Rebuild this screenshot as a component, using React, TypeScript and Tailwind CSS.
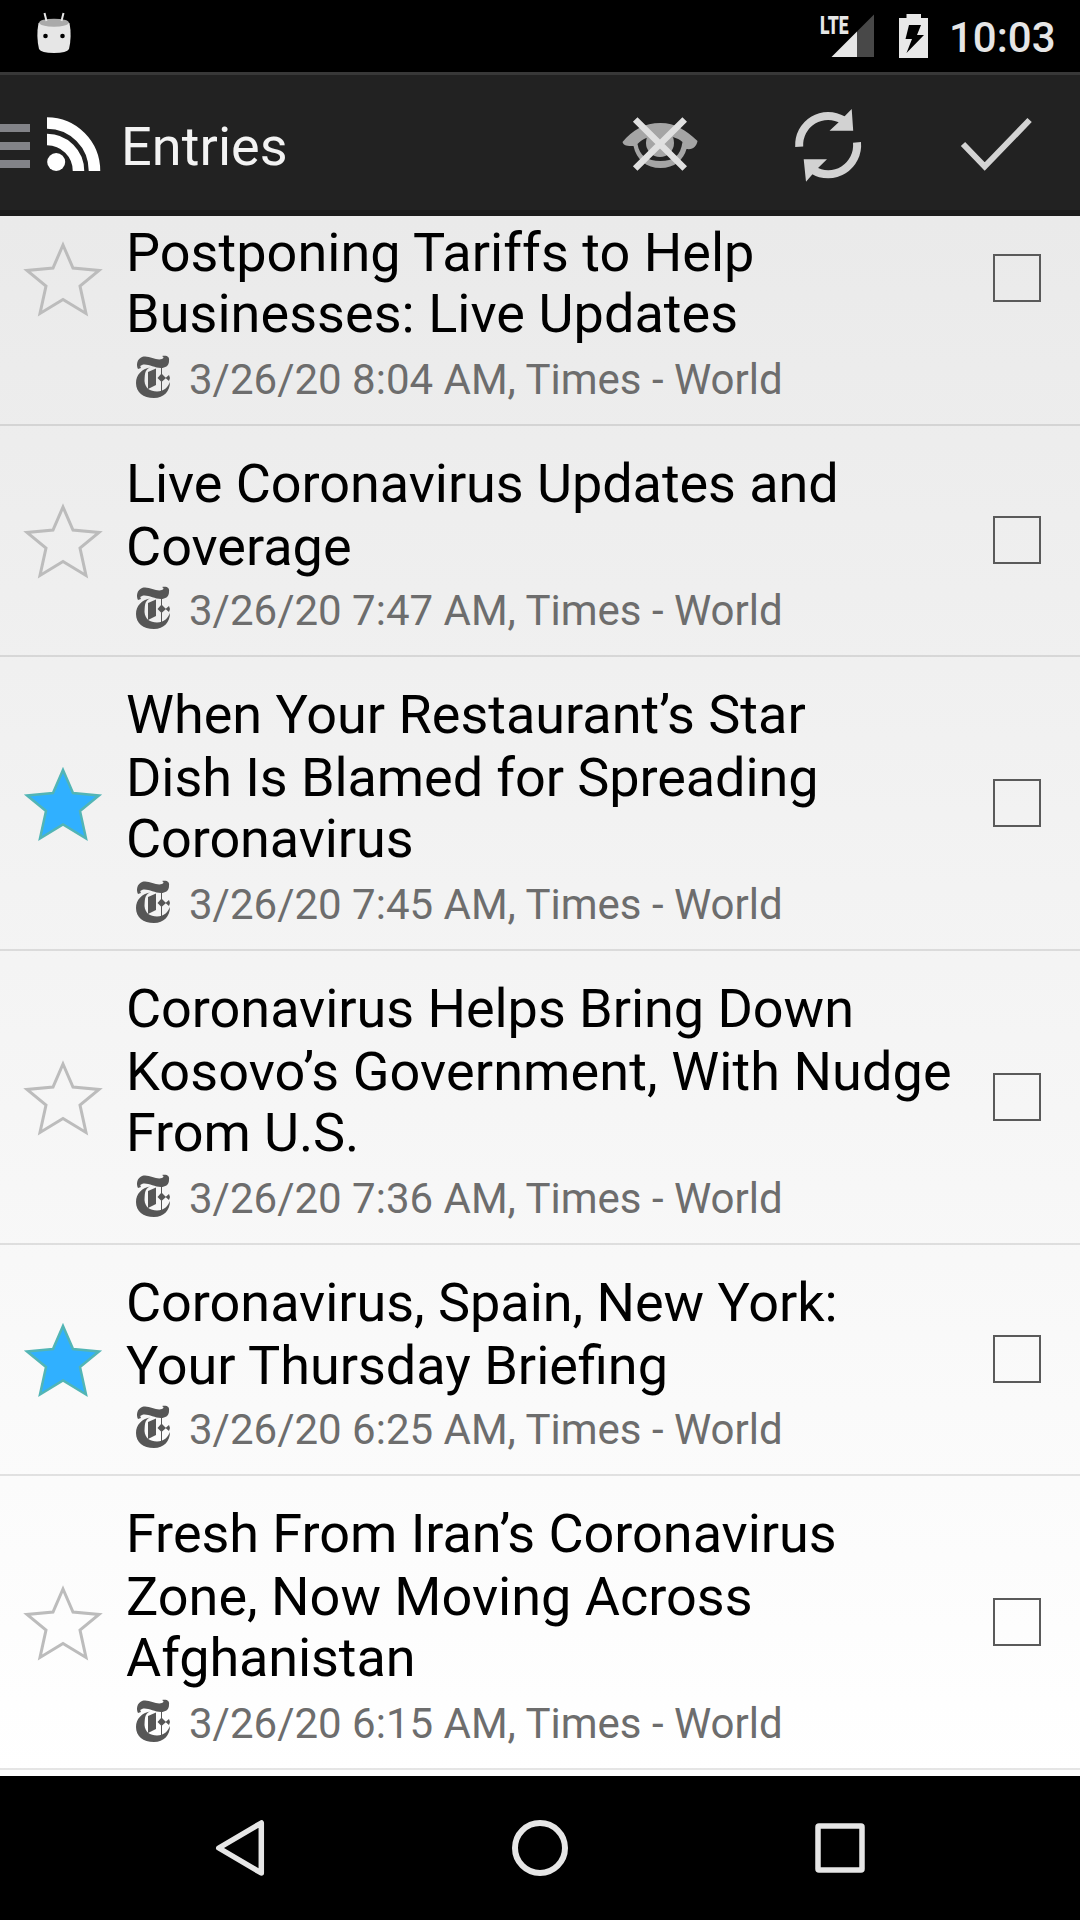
type Line = { text: string; spacing?: string };
type Row = { lines: Line[]; time: string; star: boolean; height: string; pad: string; mark: string; box: string };

const TALL = { height: 'h-[294px]', pad: 'pt-[26px]', mark: 'mt-[108px]', box: 'mt-[122px]' };
const SHORT = { height: 'h-[231px]', pad: 'pt-[26px]', mark: 'mt-[76px]', box: 'mt-[90px]' };
const CUT = { height: 'h-[210px]', pad: 'pt-[5px]', mark: 'mt-[24px]', box: 'mt-[38px]' };
const RAISED = '-mt-[2px] pb-[2px]';

const rows: Row[] = [
  {
    ...CUT,
    time: '8:04',
    star: false,
    lines: [{ text: 'Postponing Tariffs to Help', spacing: 'tracking-[0.04px]' }, { text: 'Businesses: Live Updates', spacing: `tracking-[0.05px] ${RAISED}` }],
  },
  {
    ...SHORT,
    time: '7:47',
    star: false,
    lines: [{ text: 'Live Coronavirus Updates and', spacing: 'tracking-[-0.06px]' }, { text: 'Coverage' }],
  },
  {
    ...TALL,
    time: '7:45',
    star: true,
    lines: [{ text: 'When Your Restaurant’s Star' }, { text: 'Dish Is Blamed for Spreading', spacing: 'tracking-[-0.08px]' }, { text: 'Coronavirus', spacing: `tracking-[-0.1px] ${RAISED}` }],
  },
  {
    ...TALL,
    time: '7:36',
    star: false,
    lines: [{ text: 'Coronavirus Helps Bring Down', spacing: 'tracking-[-0.04px]' }, { text: 'Kosovo’s Government, With Nudge', spacing: 'tracking-[0.1px]' }, { text: 'From U.S.', spacing: `tracking-[-0.1px] ${RAISED}` }],
  },
  {
    ...SHORT,
    time: '6:25',
    star: true,
    lines: [{ text: 'Coronavirus, Spain, New York:', spacing: 'tracking-[-0.04px]' }, { text: 'Your Thursday Briefing' }],
  },
  {
    ...TALL,
    time: '6:15',
    star: false,
    lines: [{ text: 'Fresh From Iran’s Coronavirus', spacing: 'tracking-[-0.04px]' }, { text: 'Zone, Now Moving Across' }, { text: 'Afghanistan', spacing: `tracking-[-0.1px] ${RAISED}` }],
  },
];

function Star({ on }: { on: boolean }) {
  return (
    <svg width="80" height="78" viewBox="0 0 80 78">
      <path
        d="M40 5 L50 28 L76 30.500 L57 46 L63 73.500 L40 59.500 L17 73.500 L23 46 L4 30.500 L30 28 Z"
        fill={on ? '#30b0ff' : 'none'}
        stroke={on ? '#52b5b5' : '#bcbcbc'}
        strokeWidth={on ? 2.5 : 3}
      />
    </svg>
  );
}

function TimesMark() {
  return (
    <svg width="36" height="44" viewBox="0 0 36 44" fill="#565656">
      <path d="M2 14 C0 10 1 4 6 2 C13 0 20 6 26 4 C28 3 28 2 26 1 C30 0 34 1 33 6 C33 11 29 13 25 13 C18 13 11 8 6 10 C3 11 5 12 5 13 Z" />
      <path d="M14 12.500 C8 15 9 21 8.500 26 C9 33 14 36.500 21 36.500 C28 36.500 32 32 34 27 C34 36 28 43 18 43 C7 43 0 37 0 28 C0 20 6 13.500 14 12.500 Z" />
      <path d="M12 17 L20 13.500 V30 L12 34 Z" />
      <path d="M25.500 18.500 L30 23 L25.500 27 L21.500 23 Z M25 13 H26 V37 H25 Z M33 20 L34 23 L33 26 L29.500 23 Z" />
    </svg>
  );
}

export default function App() {
  return (
    <div className="flex h-[1920px] w-[1080px] flex-col overflow-hidden bg-black font-['Roboto',sans-serif]">
      <header className="flex h-[72px] shrink-0 items-start">
        <svg className="ml-[36px] mt-[12px]" width="36" height="42" viewBox="0 0 36 42">
          <path d="M2.500 11 Q18 4 33.500 11 Q36 24 33 37 Q31 41 18 41 Q5 41 3 37 Q0 24 2.500 11 Z" fill="#e6e6e6" />
          <ellipse cx="18" cy="10.700" rx="14.800" ry="4" fill="#aaaaaa" />
          <path d="M8.500 1 L10.500 9 M27.500 1 L25.500 9" stroke="#e6e6e6" strokeWidth="2" />
          <circle cx="9.500" cy="24" r="2.300" />
          <circle cx="26.500" cy="24" r="2.300" />
        </svg>
        <svg className="ml-[748px] mt-[4px] overflow-visible" width="56" height="54" viewBox="0 -10 56 54">
          <path d="M54 0.500 V43 H37 V17.500 Z" fill="#484848" />
          <path d="M37 17.500 V43 H11.500 Z" fill="#e6e6e6" />
          <text x="0" y="20" fontSize="26.500" fontWeight="900" textLength="28.500" lengthAdjust="spacingAndGlyphs" fill="#e6e6e6">LTE</text>
        </svg>
        <svg className="ml-[23px] mt-[14px]" width="30" height="44" viewBox="0 0 30 44">
          <path fillRule="evenodd" d="M7.500 0 H22 V4 H29 V44 H0 V4 H7.500 Z M10 11 H22 L18 21 H25 L7.500 39 L13 25 H6.500 Z" fill="#e8e8e8" />
        </svg>
        <span className="ml-[20px] mt-[13px] text-[42px] leading-[50px] font-medium whitespace-nowrap text-[#e6e6e6]">10:03</span>
      </header>

      <nav className="flex h-[144px] shrink-0 items-start border-t-[3px] border-b-[6px] border-t-[#383838] border-b-[#1b1b1b] bg-[#222222]">
        <svg className="mt-[49px]" width="30" height="44" viewBox="0 0 30 44" fill="#828388">
          <path d="M0 0 H30 V8 H0 Z M0 18 H30 V26 H0 Z M0 36 H30 V44 H0 Z" />
        </svg>
        <svg className="ml-[17px] mt-[42px]" width="54" height="54" viewBox="0 0 54 54">
          <circle cx="9.200" cy="45" r="9" fill="#fff" />
          <path d="M0 22.500 A31.500 31.500 0 0 1 31.500 54 M0 6 A47.500 48 0 0 1 47.500 54" stroke="#fff" strokeWidth="11.500" fill="none" />
        </svg>
        <h1 className="ml-[20px] mt-[40px] w-[501px] text-[54px] leading-[64px] font-normal tracking-[0.1px] text-[#f3f3f3]">Entries</h1>
        <svg className="mt-[40px]" width="76" height="58" viewBox="0 0 76 58">
          <g transform="translate(0.500 2)">
            <path fillRule="evenodd" d="M0 25 C10 13 22 6 38 6 C53 6 63 13 75 24 C74 29 71 33 64 32 C61 43 52 51 38 51 C24 51 14 43 11 29 C5 29 1 29 0 25 Z M15 27 C17 39 25 44 38 44 C51 44 58 39 60 25 C54 20 49 20 45 19 H31 C25 20 20 22 15 27 Z" fill="#a5a5a5" />
            <circle cx="37.500" cy="26" r="14" fill="#a5a5a5" />
          </g>
          <path d="M13.200 4.500 L62.700 53.500 M62.700 4.500 L13.200 53.500" stroke="#e0e0e0" strokeWidth="6.500" />
        </svg>
        <svg className="ml-[96px] mt-[33px]" width="68" height="76" viewBox="0 0 68 76">
          <path d="M5.200 38.700 A29 29.200 0 0 1 49 12 M63 34.300 A29 29.200 0 0 1 19 62" stroke="#d2d2d2" strokeWidth="8" fill="none" />
          <path d="M57.700 1 L59.200 22.700 H35.500 L46 13 Z M9.700 51.300 H33 L23 61 L12 73.700 Z" fill="#d2d2d2" />
        </svg>
        <svg className="ml-[97px] mt-[41px]" width="74" height="56" viewBox="0 0 74 56">
          <path d="M4 28 L25.700 50.500 L70.600 4" stroke="#d3d3d3" strokeWidth="6" fill="none" />
        </svg>
      </nav>

      <main className="h-[1560px] shrink-0 overflow-hidden bg-linear-to-b from-[#eaeaea] to-white">
        {rows.map((row) => (
          <article key={row.time} className={`flex items-start border-b-2 border-black/10 ${row.height}`}>
            <div className="w-[126px] shrink-0 pl-[23px]">
              <div className={row.mark}><Star on={row.star} /></div>
            </div>
            <div className={`flex flex-1 flex-col ${row.pad}`}>
              <h2 className="text-[54px] leading-[63px] font-normal whitespace-nowrap text-black">
                {row.lines.map((line) => <span key={line.text} className={`block ${line.spacing ?? ''}`}>{line.text}</span>)}
              </h2>
              <div className="flex items-start pt-[8px]">
                <div className="ml-[10px]"><TimesMark /></div>
                <p className="ml-[17px] text-[42px] leading-[50px] whitespace-nowrap text-[#6d6d6d]">3/26/20 {row.time} AM, Times - World</p>
              </div>
            </div>
            <div className="w-[87px] shrink-0"><div className={`h-[48px] w-[48px] border-2 border-[#5a5a5a] ${row.box}`} /></div>
          </article>
        ))}
      </main>

      <footer className="flex h-[144px] items-center justify-center gap-[244px]">
        <svg width="56" height="56" viewBox="0 0 56 56"><path d="M49.300 3 V53 L6.800 28 Z" stroke="#e6e6e6" strokeWidth="5.500" strokeLinejoin="round" fill="none" /></svg>
        <svg width="56" height="56" viewBox="0 0 56 56"><circle cx="28" cy="28" r="25" stroke="#e6e6e6" strokeWidth="6" fill="none" /></svg>
        <svg width="56" height="56" viewBox="0 0 56 56"><rect x="6" y="6" width="44" height="44" rx="1" stroke="#e6e6e6" strokeWidth="5.500" fill="none" /></svg>
      </footer>
    </div>
  );
}
